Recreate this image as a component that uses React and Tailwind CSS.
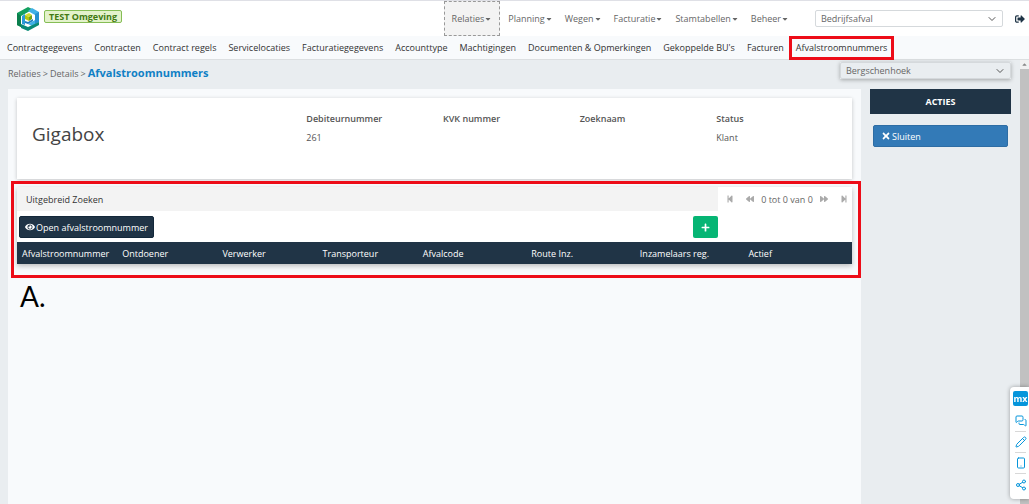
import React, { useState } from 'react'
import { ChevronDown, MessagesSquare, Pencil, Smartphone, Share2 } from 'lucide-react'
import { FaBackward, FaCaretDown, FaCaretUp, FaEye, FaForward, FaPlus, FaSignOutAlt, FaStepBackward, FaStepForward, FaTimes } from 'react-icons/fa'

const mainMenu = ['Relaties', 'Planning', 'Wegen', 'Facturatie', 'Stamtabellen', 'Beheer']

const subMenu = [
  'Contractgegevens',
  'Contracten',
  'Contract regels',
  'Servicelocaties',
  'Facturatiegegevens',
  'Accounttype',
  'Machtigingen',
  'Documenten & Opmerkingen',
  'Gekoppelde BU\'s',
  'Facturen',
  'Afvalstroomnummers'
]

const details = [
  { label: 'Debiteurnummer', value: '261' },
  { label: 'KVK nummer', value: '' },
  { label: 'Zoeknaam', value: '' },
  { label: 'Status', value: 'Klant' }
]

const columns = [
  { name: 'Afvalstroomnummer', width: 'w-[12%]' },
  { name: 'Ontdoener', width: 'w-[12%]' },
  { name: 'Verwerker', width: 'w-[12%]' },
  { name: 'Transporteur', width: 'w-[12%]' },
  { name: 'Afvalcode', width: 'w-[13%]' },
  { name: 'Route Inz.', width: 'w-[13%]' },
  { name: 'Inzamelaars reg.', width: 'w-[13%]' },
  { name: 'Actief', width: 'w-[13%]' }
]

function Logo() {
  return (
    <svg viewBox="0 0 24 26" className="h-[26px] w-6" aria-hidden="true">
      <path d="M12 1 L1 7 V19 L5 21 V10 L14 5 L16 3 Z" fill="#12a05f" />
      <path d="M1 7 L5 10 V21 L1 19 Z" fill="#0b7f4d" />
      <path d="M16 2 L23 6 V16 L16 20 L12 18 L19 14 V9 L12 5 Z" fill="#3fb0e6" />
      <path d="M19 8 L23 6 V16 L19 18 Z" fill="#2590cf" />
      <path d="M5 18 L12 21 L23 16 V19 L12 25 L5 22 Z" fill="#0a8a76" />
      <path d="M6 10 L9 8 V19 L6 18 Z" fill="#2a9bd8" />
      <path d="M9 15 L12 16 L17 13 V15 L12 18 L9 17 Z" fill="#1c7fc0" />
      <path d="M9 9 L13 7 L16 9 L13 11 Z" fill="#cfdc2e" />
      <path d="M9 9 L13 11 V15 L9 13 Z" fill="#b3c510" />
      <path d="M13 11 L16 9 V13 L13 15 Z" fill="#6fa01c" />
    </svg>
  )
}

function Dropdown({ label, value, className }) {
  return (
    <div className={'relative ' + className}>
      <select
        aria-label={label}
        defaultValue={value}
        className="h-full w-full appearance-none rounded-[2px] border border-[#d5d9dc] bg-transparent px-[5px] text-[#666]"
      >
        <option>{value}</option>
      </select>
      <ChevronDown size={12} strokeWidth={2} className="pointer-events-none absolute top-1/2 right-[5px] -translate-y-1/2 text-[#555]" />
    </div>
  )
}

function Header() {
  const [active, setActive] = useState('Relaties')

  return (
    <header className="flex h-9 items-stretch border-t border-[#dfe0e6] bg-white">
      <div className="flex items-center pl-4">
        <Logo />
        <span className="mb-1 ml-1 rounded-[2px] border border-[#85bd55] bg-[#e3f2cb] px-1 text-[9px] leading-[11px] font-bold text-[#417a12]">TEST Omgeving</span>
      </div>
      <nav className="ml-auto flex" aria-label="Hoofdmenu">
        {mainMenu.map(item => (
          <button
            key={item}
            onClick={() => setActive(item)}
            className={item === active
              ? 'mr-[2px] flex items-center border border-dashed border-[#999] bg-[#f3f3f3] px-[7px] text-[#666]'
              : 'flex items-center px-[6px] text-[#666]'}
          >
            {item}
            <FaCaretDown size={8} />
          </button>
        ))}
      </nav>
      <Dropdown label="Afdeling" value="Bedrijfsafval" className="mr-3 ml-5 h-[17px] w-[188px] self-center" />
      <button aria-label="Uitloggen" className="mr-1 text-[#1f3446]">
        <FaSignOutAlt size={10} />
      </button>
    </header>
  )
}

function SubMenu() {
  return (
    <nav className="flex h-6 items-center gap-3 border-b border-[#dcdfe1] bg-[#f8fafc] pl-[7px] whitespace-nowrap" aria-label="Submenu">
      {subMenu.map(item => (
        <a
          key={item}
          href="#"
          className={item === 'Afvalstroomnummers'
            ? '-ml-[7px] flex h-6 items-center border-[3px] border-[#ed0c18] px-1 text-[#333]'
            : 'text-[#333]'}
        >
          {item}
        </a>
      ))}
    </nav>
  )
}

function CustomerCard() {
  return (
    <section className="mx-[9px] mt-[9px] grid h-[81px] grid-cols-6 bg-white pl-[15px] shadow-[0_1px_4px_rgba(0,0,0,0.22)]">
      <h1 className="col-span-2 self-center pb-2 text-[19px] text-[#444]">Gigabox</h1>
      {details.map(d => (
        <dl key={d.label} className="pt-[14px] pl-px text-[#555]">
          <dt className="leading-[13px] font-semibold">{d.label}</dt>
          <dd className="mt-[6px] leading-[13px]">{d.value}</dd>
        </dl>
      ))}
    </section>
  )
}

function Paging() {
  return (
    <div className="flex w-[134px] items-center justify-between bg-white pr-1 pl-2 text-[#666]">
      <button aria-label="Eerste" className="text-[#aaa]"><FaStepBackward size={8} /></button>
      <button aria-label="Vorige" className="ml-1 text-[#aaa]"><FaBackward size={8} /></button>
      <span>0 tot 0 van 0</span>
      <button aria-label="Volgende" className="mr-1 text-[#aaa]"><FaForward size={8} /></button>
      <button aria-label="Laatste" className="text-[#aaa]"><FaStepForward size={8} /></button>
    </div>
  )
}

function WasteStreams() {
  return (
    <div className="ml-[3px] border-[3px] border-[#ed0c18] px-[3px] pt-[3px] pb-[11px]">
      <section className="mr-[3px] bg-white shadow-[0_2px_5px_rgba(0,0,0,0.25)]">
        <div className="flex h-6 bg-[#f3f3f3]">
          <h2 className="flex flex-1 items-center pl-[9px] text-[#333]">Uitgebreid Zoeken</h2>
          <Paging />
        </div>
        <div className="flex justify-between pt-[5px] pr-[134px] pb-1 pl-[2px]">
          <button className="flex h-[22px] items-center gap-px rounded-[2px] border border-[#13283a] bg-[#203446] px-[5px] text-white">
            <FaEye size={10} />
            Open afvalstroomnummer
          </button>
          <button aria-label="Toevoegen" className="flex h-[22px] w-[25px] items-center justify-center rounded-[2px] bg-[#06b574] text-white">
            <FaPlus size={9} />
          </button>
        </div>
        <table className="w-full table-fixed bg-[#203446] text-left text-white">
          <thead>
            <tr className="h-[22px]">
              {columns.map(c => (
                <th key={c.name} className={c.width + ' pl-[5px] font-normal whitespace-nowrap'}>{c.name}</th>
              ))}
            </tr>
          </thead>
        </table>
      </section>
    </div>
  )
}

function Actions() {
  return (
    <aside className="w-[141px] shrink-0">
      <h2 className="flex h-[25px] items-center justify-center bg-[#203446] font-bold text-white">ACTIES</h2>
      <div className="px-[3px] pt-[11px]">
        <button className="flex h-[22px] w-full items-center gap-px rounded-[2px] border border-[#2e6da4] bg-[#337ab7] px-[7px] text-white">
          <FaTimes size={10} />
          Sluiten
        </button>
      </div>
    </aside>
  )
}

function ScrollTrack() {
  return (
    <div className="flex w-[9px] shrink-0 flex-col bg-[#c1c1c1]">
      <div className="flex h-[9px] items-center justify-center bg-[#f1f1f1] text-[#888]">
        <FaCaretUp size={7} />
      </div>
    </div>
  )
}

function MxPanel() {
  const tools = [
    { name: 'Feedback', icon: MessagesSquare },
    { name: 'Bewerken', icon: Pencil },
    { name: 'Mobiel', icon: Smartphone },
    { name: 'Delen', icon: Share2 }
  ]

  return (
    <div className="fixed right-0 bottom-[5px] flex w-[19px] flex-col items-center rounded-l-[4px] bg-white py-1 pl-[2px] shadow-[0_0_4px_rgba(0,0,0,0.35)]">
      <span className="mb-[5px] flex h-[15px] w-[15px] items-center justify-center rounded-[2px] bg-[#0595db] text-[9px] leading-[9px] font-bold text-white">mx</span>
      {tools.map(({ name, icon: Icon }) => (
        <button key={name} aria-label={name} className="flex h-[21px] w-[11px] items-center justify-center border-b border-[#d8d8d8] text-[#0595db] last:border-b-0">
          <Icon size={12} strokeWidth={2} className="shrink-0" />
        </button>
      ))}
    </div>
  )
}

export default function App() {
  return (
    <div className="flex min-h-screen flex-col bg-[#e9edf0] font-['Open_Sans','Noto_Sans',sans-serif] text-[9px] leading-[13px]">
      <Header />
      <SubMenu />
      <div className="flex flex-1">
        <div className="flex min-w-0 flex-1 flex-col pr-[9px] pl-2">
          <div className="flex h-[29px] items-start justify-between">
            <div className="flex items-baseline gap-[2px] pt-[6px] text-[#666]">
              <a href="#">Relaties</a>
              <span>&gt;</span>
              <a href="#">Details</a>
              <span>&gt;</span>
              <b className="text-[11px] text-[#1080c5]">Afvalstroomnummers</b>
            </div>
            <Dropdown label="Vestiging" value="Bergschenhoek" className="mt-[2px] h-[17px] w-[171px] shadow-[0_1px_4px_rgba(0,0,0,0.3)]" />
          </div>
          <div className="flex flex-1 gap-[9px]">
            <main className="min-w-0 flex-1 bg-[#f8fafc]">
              <CustomerCard />
              <div className="mt-[2px]">
                <WasteStreams />
              </div>
              <p className="pt-px pl-3 font-['Lato',sans-serif] text-[28px] leading-[34px] text-black">A.</p>
            </main>
            <Actions />
          </div>
        </div>
        <ScrollTrack />
      </div>
      <MxPanel />
    </div>
  )
}
